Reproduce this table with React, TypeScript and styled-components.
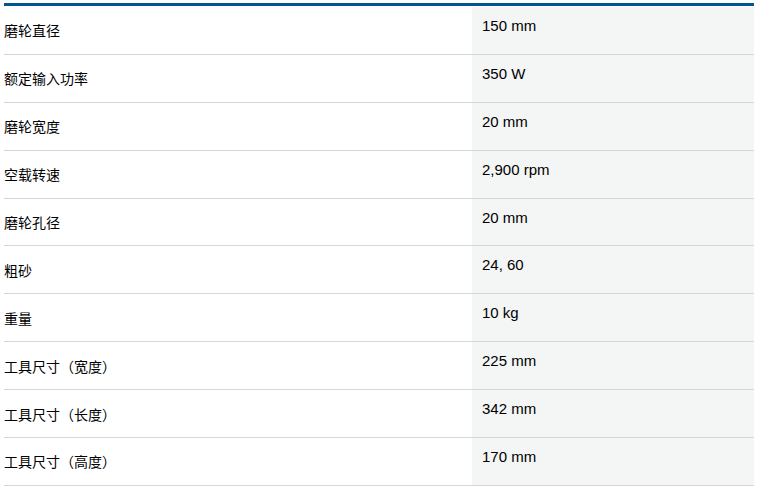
import React from "react";
import styled, { createGlobalStyle } from "styled-components";

const Global = createGlobalStyle`
  html, body { margin: 0; padding: 0; background: #ffffff; }
  body { font-family: "Liberation Sans", "Noto Sans CJK SC", sans-serif; }
`;

const Page = styled.div`
  padding: 3px 15px 0 4px;
`;

const Table = styled.div`
  width: 750px;
  border-top: 3px solid #005691;
  padding-top: 1px;
  display: flex;
  flex-direction: column;
`;

const Row = styled.div`
  display: grid;
  grid-template-columns: 468px 282px;
  height: 47.9px;
  box-sizing: border-box;
  border-bottom: 1px solid #d4d7d9;
`;

const Label = styled.div`
  display: flex;
  align-items: center;
  font-family: "Noto Sans CJK SC", "Liberation Sans", sans-serif;
  font-size: 14px;
  color: #000;
`;

const Value = styled.div`
  background: #f4f5f5;
  padding: 9px 10px 0;
  font-family: "Liberation Sans", Arial, sans-serif;
  font-size: 15px;
  line-height: 20px;
  color: #000;
`;

const data: [string, string][] = [
  ["磨轮直径", "150 mm"],
  ["额定输入功率", "350 W"],
  ["磨轮宽度", "20 mm"],
  ["空载转速", "2,900 rpm"],
  ["磨轮孔径", "20 mm"],
  ["粗砂", "24, 60"],
  ["重量", "10 kg"],
  ["工具尺寸（宽度）", "225 mm"],
  ["工具尺寸（长度）", "342 mm"],
  ["工具尺寸（高度）", "170 mm"],
];

export default function App() {
  return (
    <>
      <Global />
      <Page>
        <Table>
          {data.map(([k, v]) => (
            <Row key={k}>
              <Label>{k}</Label>
              <Value>{v}</Value>
            </Row>
          ))}
        </Table>
      </Page>
    </>
  );
}
